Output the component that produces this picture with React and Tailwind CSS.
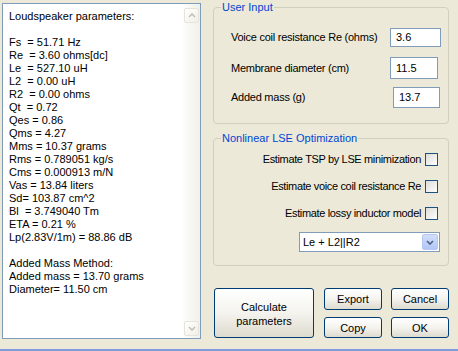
import React from 'react';

const report = [
  'Loudspeaker parameters:',
  '',
  'Fs  = 51.71 Hz',
  'Re  = 3.60 ohms[dc]',
  'Le  = 527.10 uH',
  'L2  = 0.00 uH',
  'R2  = 0.00 ohms',
  'Qt  = 0.72',
  'Qes = 0.86',
  'Qms = 4.27',
  'Mms = 10.37 grams',
  'Rms = 0.789051 kg/s',
  'Cms = 0.000913 m/N',
  'Vas = 13.84 liters',
  'Sd= 103.87 cm^2',
  'Bl  = 3.749040 Tm',
  'ETA = 0.21 %',
  'Lp(2.83V/1m) = 88.86 dB',
  '',
  'Added Mass Method:',
  'Added mass = 13.70 grams',
  'Diameter= 11.50 cm',
];

function Chevron({ up, color = '#C3C1B6' }) {
  return (
    <svg width="8" height="5" viewBox="0 0 8 5">
      <path
        d={up ? 'M1 4 L4 1 L7 4' : 'M1 1 L4 4 L7 1'}
        fill="none"
        stroke={color}
        strokeWidth="1.6"
      />
    </svg>
  );
}

function ScrollButton({ up }) {
  return (
    <div className="w-[15px] h-[15px] rounded-[2px] border border-[#E6E4DA] bg-gradient-to-br from-[#FFFFFF] to-[#F0EFE8] flex items-center justify-center">
      <Chevron up={up} />
    </div>
  );
}

function ResultsBox() {
  return (
    <div className="ml-[2px] mt-[3px] w-[199px] h-[336px] border border-[#7F9DB9] bg-white flex">
      <div className="flex-1 pl-[6px] pt-[6px] whitespace-pre">
        {report.map((line, i) => (
          <div key={i} className="h-[13px]">{line}</div>
        ))}
      </div>
      <div className="w-[17px] bg-gradient-to-r from-[#FDFDFA] to-[#F1F0EA] flex flex-col items-center justify-between pt-[4px] pb-[2px]">
        <ScrollButton up />
        <ScrollButton />
      </div>
    </div>
  );
}

function Field({ label, value, labelWidth, width, height, mt }) {
  return (
    <div className={`flex items-center pl-[17px] ${mt} ${height}`}>
      <div className={`${labelWidth} tracking-[-0.25px]`}>{label}</div>
      <div className={`${width} h-full border border-[#7F9DB9] bg-white flex items-center pl-[5px]`}>
        {value}
      </div>
    </div>
  );
}

function Check({ label, mt }) {
  return (
    <div className={`flex items-center justify-end pr-[10px] h-[13px] ${mt}`}>
      <span className="mr-[4px] tracking-[-0.35px]">{label}</span>
      <span className="w-[13px] h-[13px] border border-[#1C5180] bg-gradient-to-br from-[#DCDCD7] to-[#FFFFFF]" />
    </div>
  );
}

function XpButton({ children, className }) {
  return (
    <button className={`border border-[#003C74] rounded-[3px] bg-gradient-to-b from-[#FFFFFF] via-[#F4F3EE] to-[#DEDBCF] text-center leading-[14px] ${className}`}>
      {children}
    </button>
  );
}

export default function App() {
  return (
    <div className="w-[458px] h-[351px] bg-[#ECE9D8] flex flex-col font-['Liberation_Sans',Arial,sans-serif] text-[11px] leading-[13px] text-black">
      <div className="flex h-[349px]">
        <ResultsBox />
        <div className="ml-[12px] w-[236px] flex flex-col">
          <fieldset className="mt-[1px] h-[123px] border border-[#D0D0BF] rounded-[4px] flex flex-col">
            <legend className="ml-[7px] px-[1px] text-[#0046D5]">User Input</legend>
            <Field label="Voice coil resistance Re (ohms)" value="3.6" labelWidth="w-[159px]" width="w-[51px]" height="h-[19px]" mt="mt-[14px]" />
            <Field label="Membrane diameter (cm)" value="11.5" labelWidth="w-[159px]" width="w-[48px]" height="h-[22px]" mt="mt-[10px]" />
            <Field label="Added mass (g)" value="13.7" labelWidth="w-[162px]" width="w-[47px]" height="h-[21px]" mt="mt-[8px]" />
          </fieldset>

          <fieldset className="mt-[8px] h-[134px] border border-[#D0D0BF] rounded-[4px] flex flex-col">
            <legend className="ml-[7px] px-[1px] text-[#0046D5]">Nonlinear LSE Optimization</legend>
            <Check label="Estimate TSP by LSE minimization" mt="mt-[8px]" />
            <Check label="Estimate voice coil resistance Re" mt="mt-[14px]" />
            <Check label="Estimate lossy inductor model" mt="mt-[14px]" />
            <div className="flex justify-end pr-[8px] mt-[12px]">
              <div className="w-[141px] h-[20px] border border-[#7F9DB9] bg-white flex items-center pl-[3px] pr-[1px]">
                <span className="flex-1">Le + L2||R2</span>
                <span className="w-[16px] h-[16px] rounded-[2px] border border-[#B5C8F3] bg-gradient-to-b from-[#D2DEFB] to-[#B2C6F5] flex items-center justify-center">
                  <Chevron color="#4D6185" />
                </span>
              </div>
            </div>
          </fieldset>

          <div className="flex mt-[22px]">
            <XpButton className="ml-[1px] w-[100px] h-[50px] pt-[2px]">
              Calculate<br />parameters
            </XpButton>
            <div className="ml-[10px] flex flex-col">
              <XpButton className="w-[58px] h-[22px]">Export</XpButton>
              <XpButton className="w-[58px] h-[21px] mt-[7px]">Copy</XpButton>
            </div>
            <div className="ml-[9px] flex flex-col">
              <XpButton className="w-[58px] h-[22px]">Cancel</XpButton>
              <XpButton className="w-[58px] h-[21px] mt-[7px]">OK</XpButton>
            </div>
          </div>
        </div>
      </div>
      <div className="h-[2px] bg-[#8499E0]" />
    </div>
  );
}
